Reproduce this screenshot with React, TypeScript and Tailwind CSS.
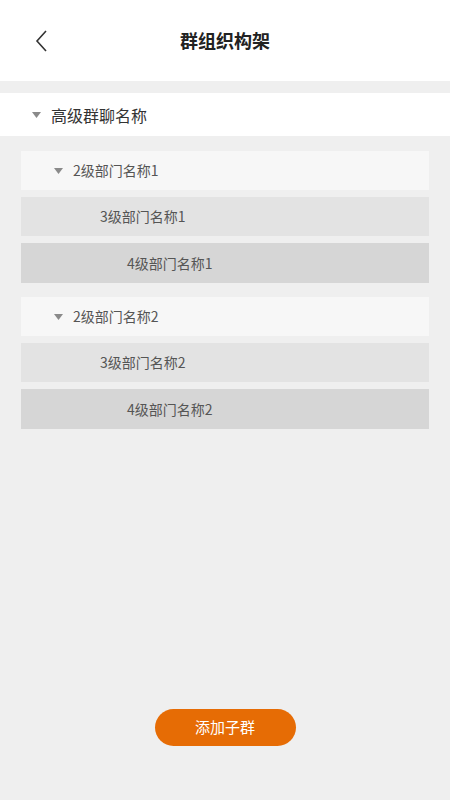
import React from "react";

const font = { fontFamily: '"Noto Sans CJK SC", "Noto Sans", sans-serif' };

const Caret = () => (
  <svg width="9" height="6" viewBox="0 0 9 6" className="shrink-0">
    <path d="M0 0h9L4.5 6z" fill="#8a8a8a" />
  </svg>
);

const groups = [
  { name: "2级部门名称1", sub: "3级部门名称1", leaf: "4级部门名称1" },
  { name: "2级部门名称2", sub: "3级部门名称2", leaf: "4级部门名称2" },
];

export default function App() {
  return (
    <div className="w-[450px] h-[800px] bg-[#efefef] flex flex-col text-[#555]" style={font}>
      <div className="h-[81px] bg-white flex items-center relative">
        <button className="absolute left-[30px] top-[29px] w-6 h-6 flex items-center justify-center">
          <svg width="14" height="22" viewBox="0 0 14 22">
            <path d="M11 1L2 11l9 10" fill="none" stroke="#333" strokeWidth="1.6" />
          </svg>
        </button>
        <h1 className="w-full text-center text-[18px] font-bold text-[#222]">群组织构架</h1>
      </div>

      <div className="mt-3 h-[43px] bg-white flex items-center gap-[10px] pl-8 text-[16px] text-[#333]">
        <Caret />
        <span>高级群聊名称</span>
      </div>

      <div className="px-[21px] pt-[15px] flex flex-col gap-[14px]">
        {groups.map((g) => (
          <div key={g.name} className="flex flex-col gap-[7px]">
            <div className="h-[39px] bg-[#f7f7f7] flex items-center gap-[10px] pl-[33px] text-[14px]">
              <Caret />
              <span>{g.name}</span>
            </div>
            <div className="h-[39px] bg-[#e3e3e3] flex items-center pl-[79px] text-[14px]">
              {g.sub}
            </div>
            <div className="h-[40px] bg-[#d6d6d6] flex items-center pl-[106px] text-[14px]">
              {g.leaf}
            </div>
          </div>
        ))}
      </div>

      <div className="mt-auto mb-[54px] flex justify-center">
        <button className="w-[141px] h-[37px] rounded-full bg-[#e66c05] text-white text-[15px]">
          添加子群
        </button>
      </div>
    </div>
  );
}
